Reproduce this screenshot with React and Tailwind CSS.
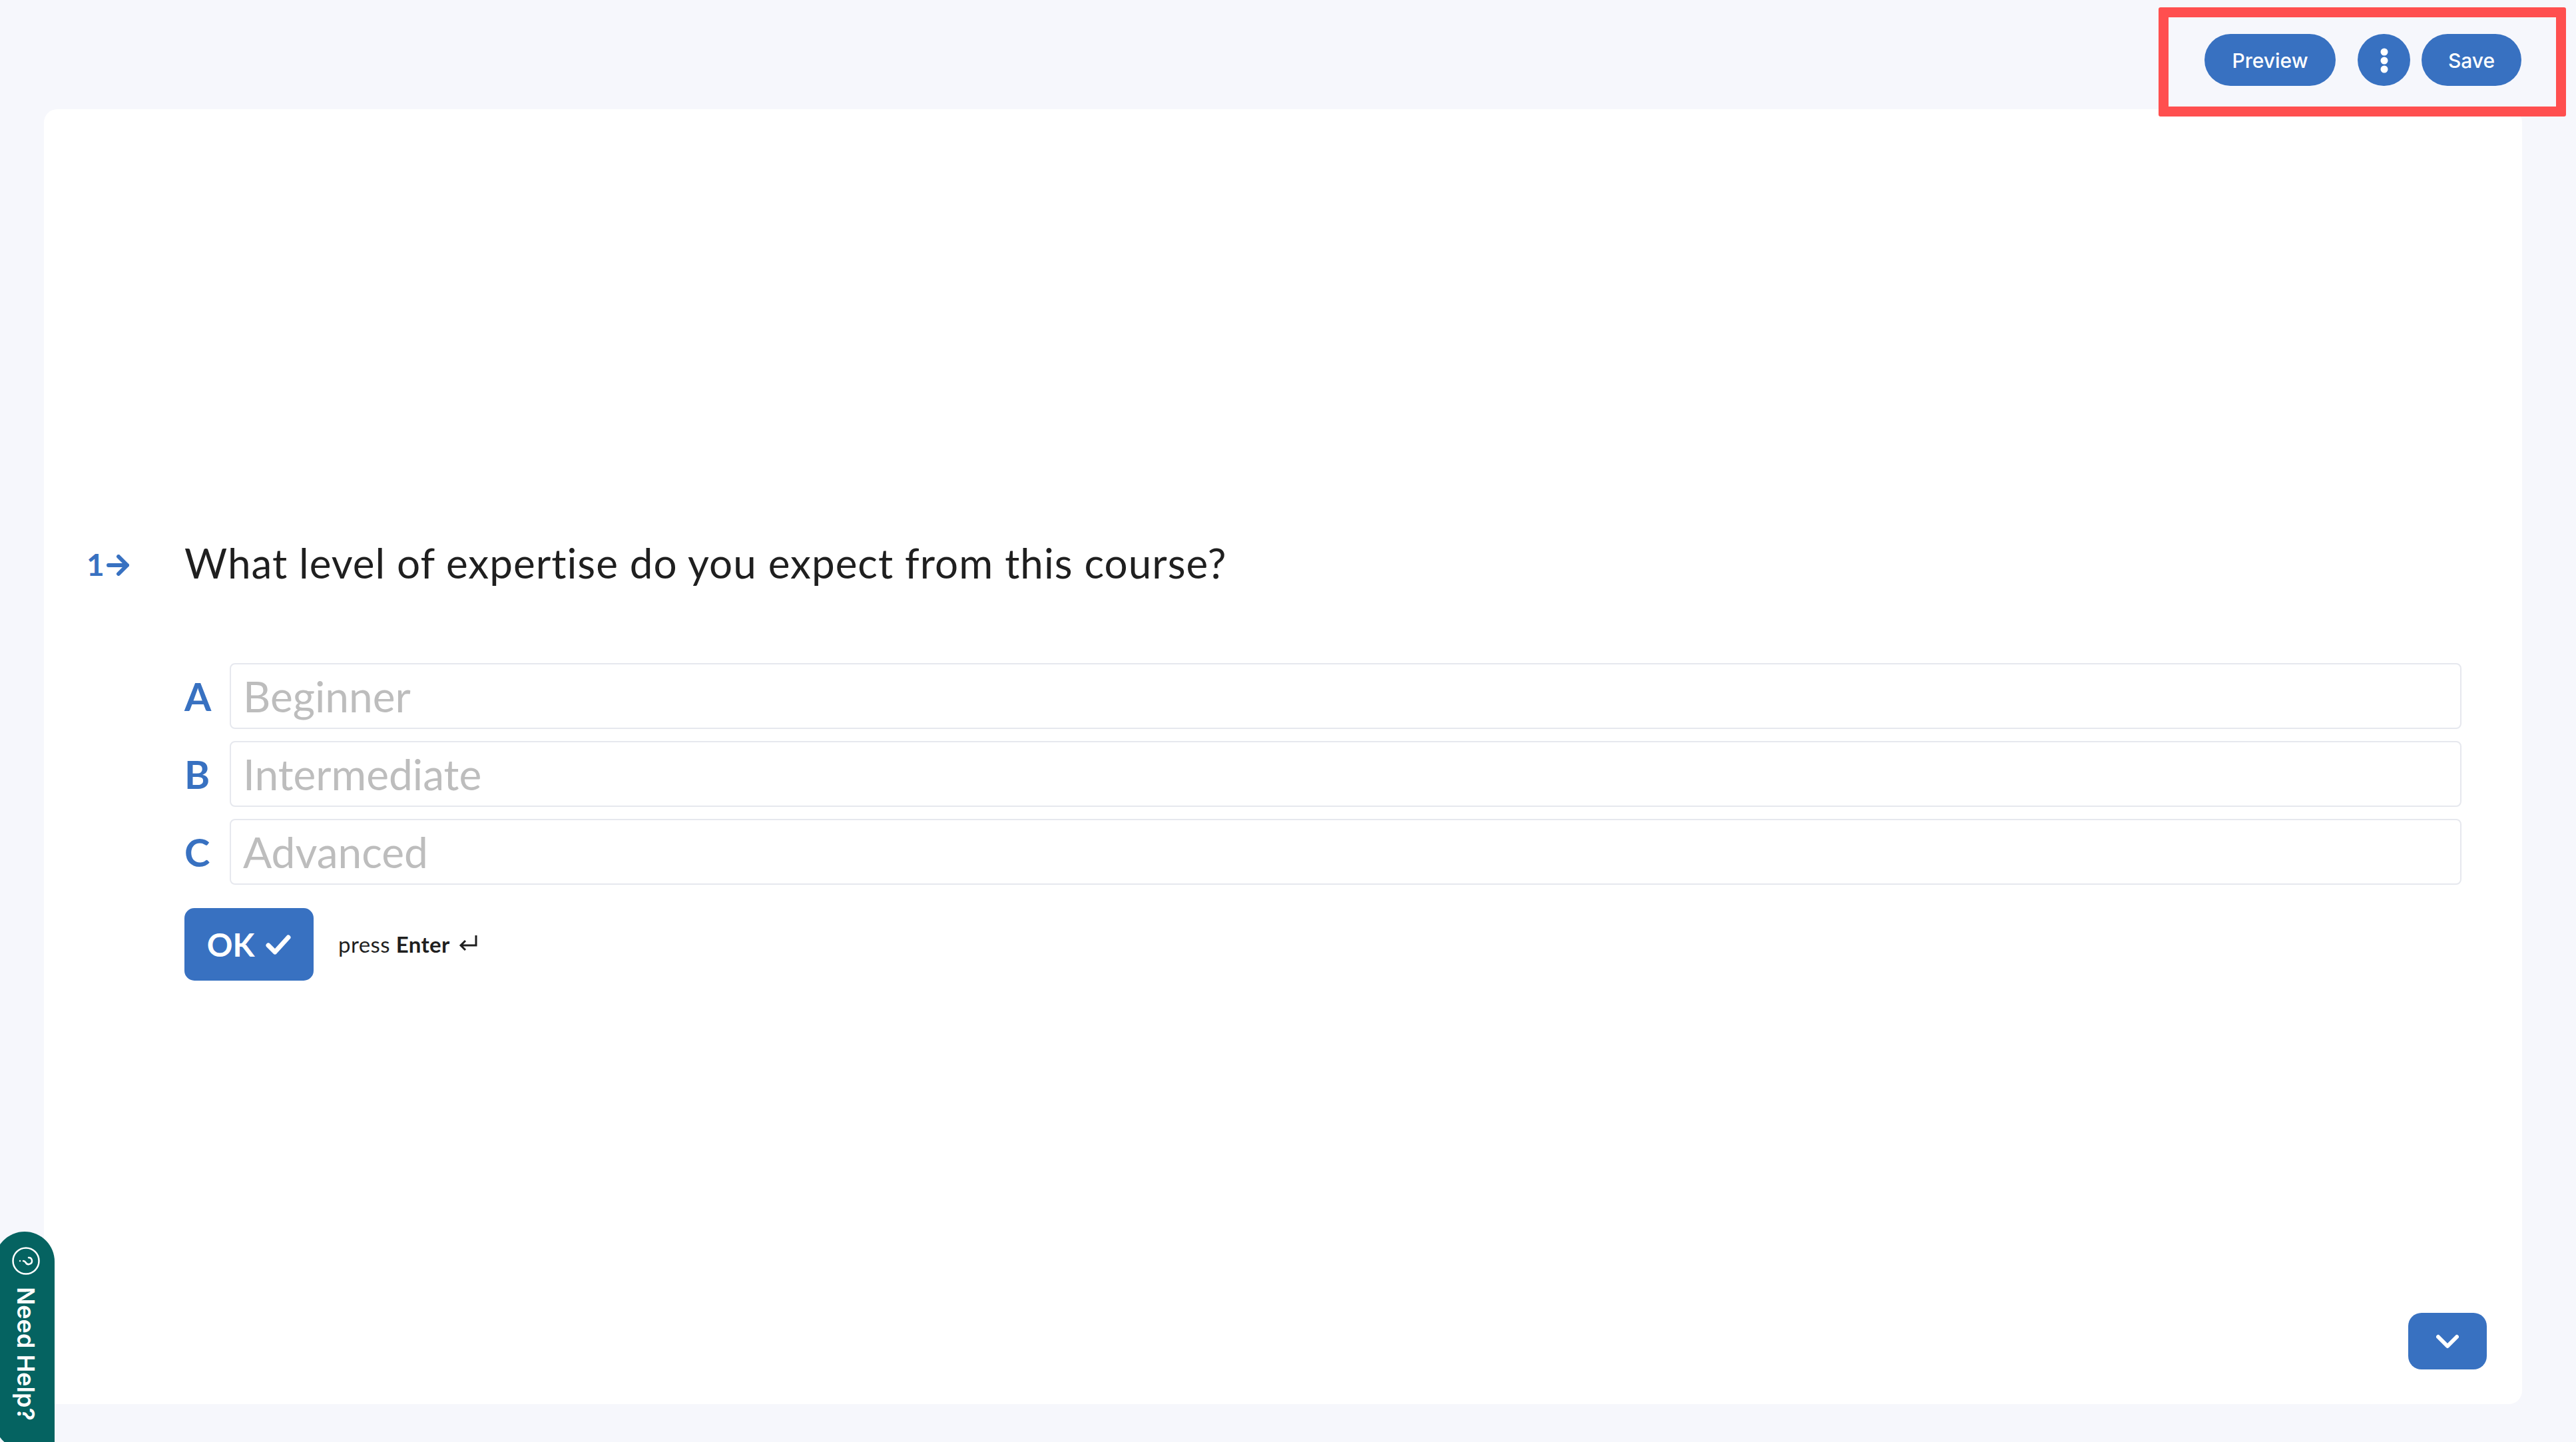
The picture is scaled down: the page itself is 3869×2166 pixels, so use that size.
function Pill({ children, className }) {
  return (
    <button className={`flex h-[78px] items-center justify-center rounded-full bg-[#3871c1] pt-[2px] text-[30px] font-medium text-white font-['Inter',sans-serif] ${className}`}>
      {children}
    </button>
  );
}

function Option({ letter, text }) {
  return (
    <div className="flex items-center">
      <span className="w-[68px] text-[58px] font-bold leading-none text-[#3871c1]">{letter}</span>
      <div className="flex h-[99px] flex-1 items-center rounded-[8px] border-2 border-[#e6e8ee] bg-white pl-[18px] text-[64px] text-[#bdbdbd]">
        {text}
      </div>
    </div>
  );
}

export default function App() {
  return (
    <div className="relative flex h-[2166px] w-[3869px] flex-col overflow-hidden bg-[#f6f7fc] font-['Lato',sans-serif] [font-variant-ligatures:none]">
      <header className="flex h-[164px] shrink-0 items-start justify-end pr-[82px] pt-[51px]">
        <Pill className="w-[197px]">Preview</Pill>
        <Pill className="ml-[33px] w-[79px]">
          <svg width="12" height="38" viewBox="0 0 12 38" fill="white">
            <circle cx="6" cy="6" r="5.5" />
            <circle cx="6" cy="19" r="5.5" />
            <circle cx="6" cy="32" r="5.5" />
          </svg>
        </Pill>
        <Pill className="ml-[17px] w-[150px]">Save</Pill>
      </header>

      <main className="ml-[66px] flex h-[1945px] w-[3722px] flex-col rounded-[20px] bg-white">
        <section className="pl-[64px] pr-[91px] pt-[645px]">
          <div className="flex h-[72px] items-center">
            <div className="mt-[5px] flex w-[147px] items-center text-[#3871c1]">
              <span className="text-[46px] font-bold leading-none">1</span>
              <svg className="ml-[3px] mt-[2px]" width="34" height="32" viewBox="0 0 34 32" fill="none" stroke="currentColor" strokeWidth="6" strokeLinecap="round" strokeLinejoin="round">
                <path d="M3 16H31M18 3L31 16L18 29" />
              </svg>
            </div>
            <h1 className="text-[62px] font-normal leading-[72px] tracking-[1px] text-[#1f1f1f]">
              What level of expertise do you expect from this course?
            </h1>
          </div>

          <div className="ml-[147px] mt-[115px] flex flex-col gap-[18px]">
            <Option letter="A" text="Beginner" />
            <Option letter="B" text="Intermediate" />
            <Option letter="C" text="Advanced" />
          </div>

          <div className="ml-[147px] mt-[35px] flex items-center">
            <button className="flex h-[109px] w-[194px] items-center justify-center gap-[17px] rounded-[15px] bg-[#3871c1] text-[48px] font-bold text-white">
              OK
              <svg width="38" height="30" viewBox="0 0 38 30" fill="none" stroke="white" strokeWidth="7" strokeLinecap="round" strokeLinejoin="round">
                <path d="M4 16L14 26L34 4" />
              </svg>
            </button>
            <span className="ml-[37px] text-[33px] tracking-[0.4px] text-[#1f1f1f]">
              press <strong className="font-bold">Enter</strong>
            </span>
            <svg className="mb-[6px] ml-[13px]" width="28" height="24" viewBox="0 0 28 24" fill="none" stroke="#1f1f1f" strokeWidth="3">
              <path d="M26 1V16H3M10 9L3 16L10 23" />
            </svg>
          </div>
        </section>

        <div className="mt-auto flex justify-end pb-[52px] pr-[53px]">
          <button className="flex h-[85px] w-[118px] items-center justify-center rounded-[20px] bg-[#3871c1]">
            <svg width="34" height="22" viewBox="0 0 34 22" fill="none" stroke="white" strokeWidth="6" strokeLinecap="round" strokeLinejoin="round">
              <path d="M3 4L17 18L31 4" />
            </svg>
          </button>
        </div>
      </main>

      <div className="absolute left-[3242px] top-[11px] h-[164px] w-[612px] rounded-[3px] border-[15px] border-[#ff4f4f]" />

      <button className="absolute left-[-8px] top-[1850px] flex h-[328px] w-[90px] flex-col items-center rounded-t-[45px] rounded-bl-[45px] bg-[#056361] pl-[3px] pt-[23px] text-white">
        <svg className="shrink-0" width="42" height="42" viewBox="0 0 42 42" fill="none" stroke="white" strokeWidth="2.5">
          <circle cx="21" cy="21" r="19.5" />
          <g transform="rotate(90 21 21)">
            <path d="M16 17a5 5 0 1 1 7.5 4.3c-1.6 1-2.5 1.8-2.5 3.7" strokeLinecap="round" />
            <circle cx="21" cy="30" r="1.2" fill="white" stroke="none" />
          </g>
        </svg>
        <span className="mt-[18px] text-[36px] font-semibold leading-none font-['Inter',sans-serif] [writing-mode:vertical-rl]">Need Help?</span>
      </button>
    </div>
  );
}
